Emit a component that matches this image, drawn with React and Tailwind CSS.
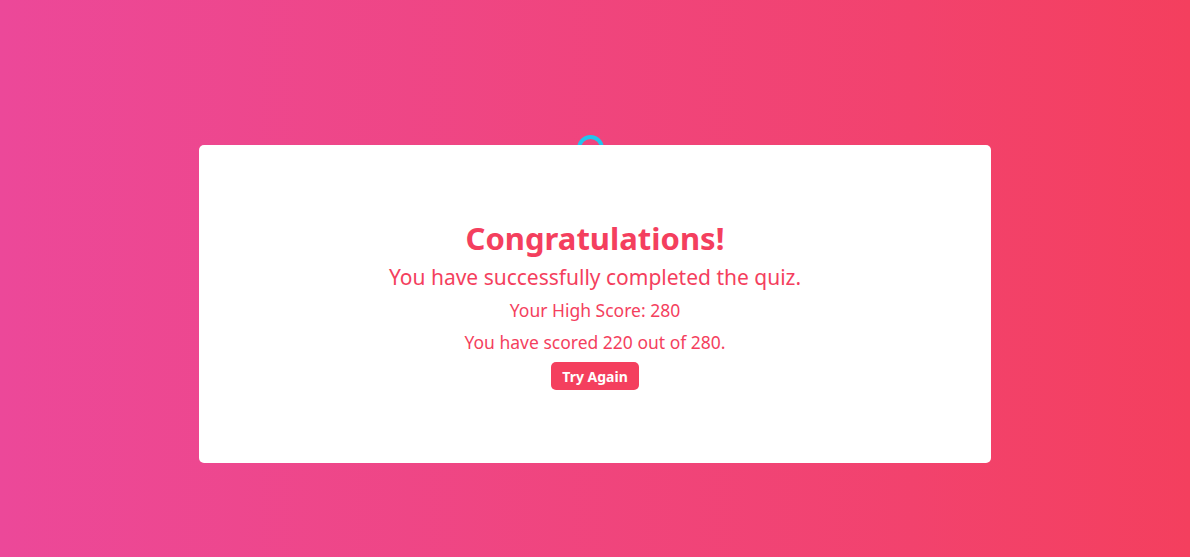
export default function App() {
  return (
    <div
      className="h-[557px] w-full overflow-hidden bg-gradient-to-r from-[#ec4899] to-[#f43f5e] flex flex-col items-center pt-[135px]"
      style={{ fontFamily: '"Noto Sans", "Open Sans", sans-serif' }}
    >
      <div className="w-[27px] h-[27px] rounded-full border-4 border-[#22c4ee] -mb-[17px] -ml-[9px]" />
      <div className="relative z-10 w-[792px] h-[318px] bg-white rounded-[5px] flex flex-col items-center pt-[73px]">
        <h1 className="text-[31px] leading-[40px] font-bold text-[#f43f5e]">Congratulations!</h1>
        <p className="text-[21px] leading-[30px] text-[#f43f5e] mt-[4px]">You have successfully completed the quiz.</p>
        <p className="text-[17.5px] leading-[24px] text-[#f43f5e] mt-[6px]">Your High Score: 280</p>
        <p className="text-[17.5px] leading-[24px] text-[#f43f5e] mt-[8px]">You have scored 220 out of 280.</p>
        <button className="mt-[8px] h-[28px] px-[11px] rounded-[5px] bg-[#f43f5e] text-white text-[14px] font-bold">
          Try Again
        </button>
      </div>
    </div>
  );
}
